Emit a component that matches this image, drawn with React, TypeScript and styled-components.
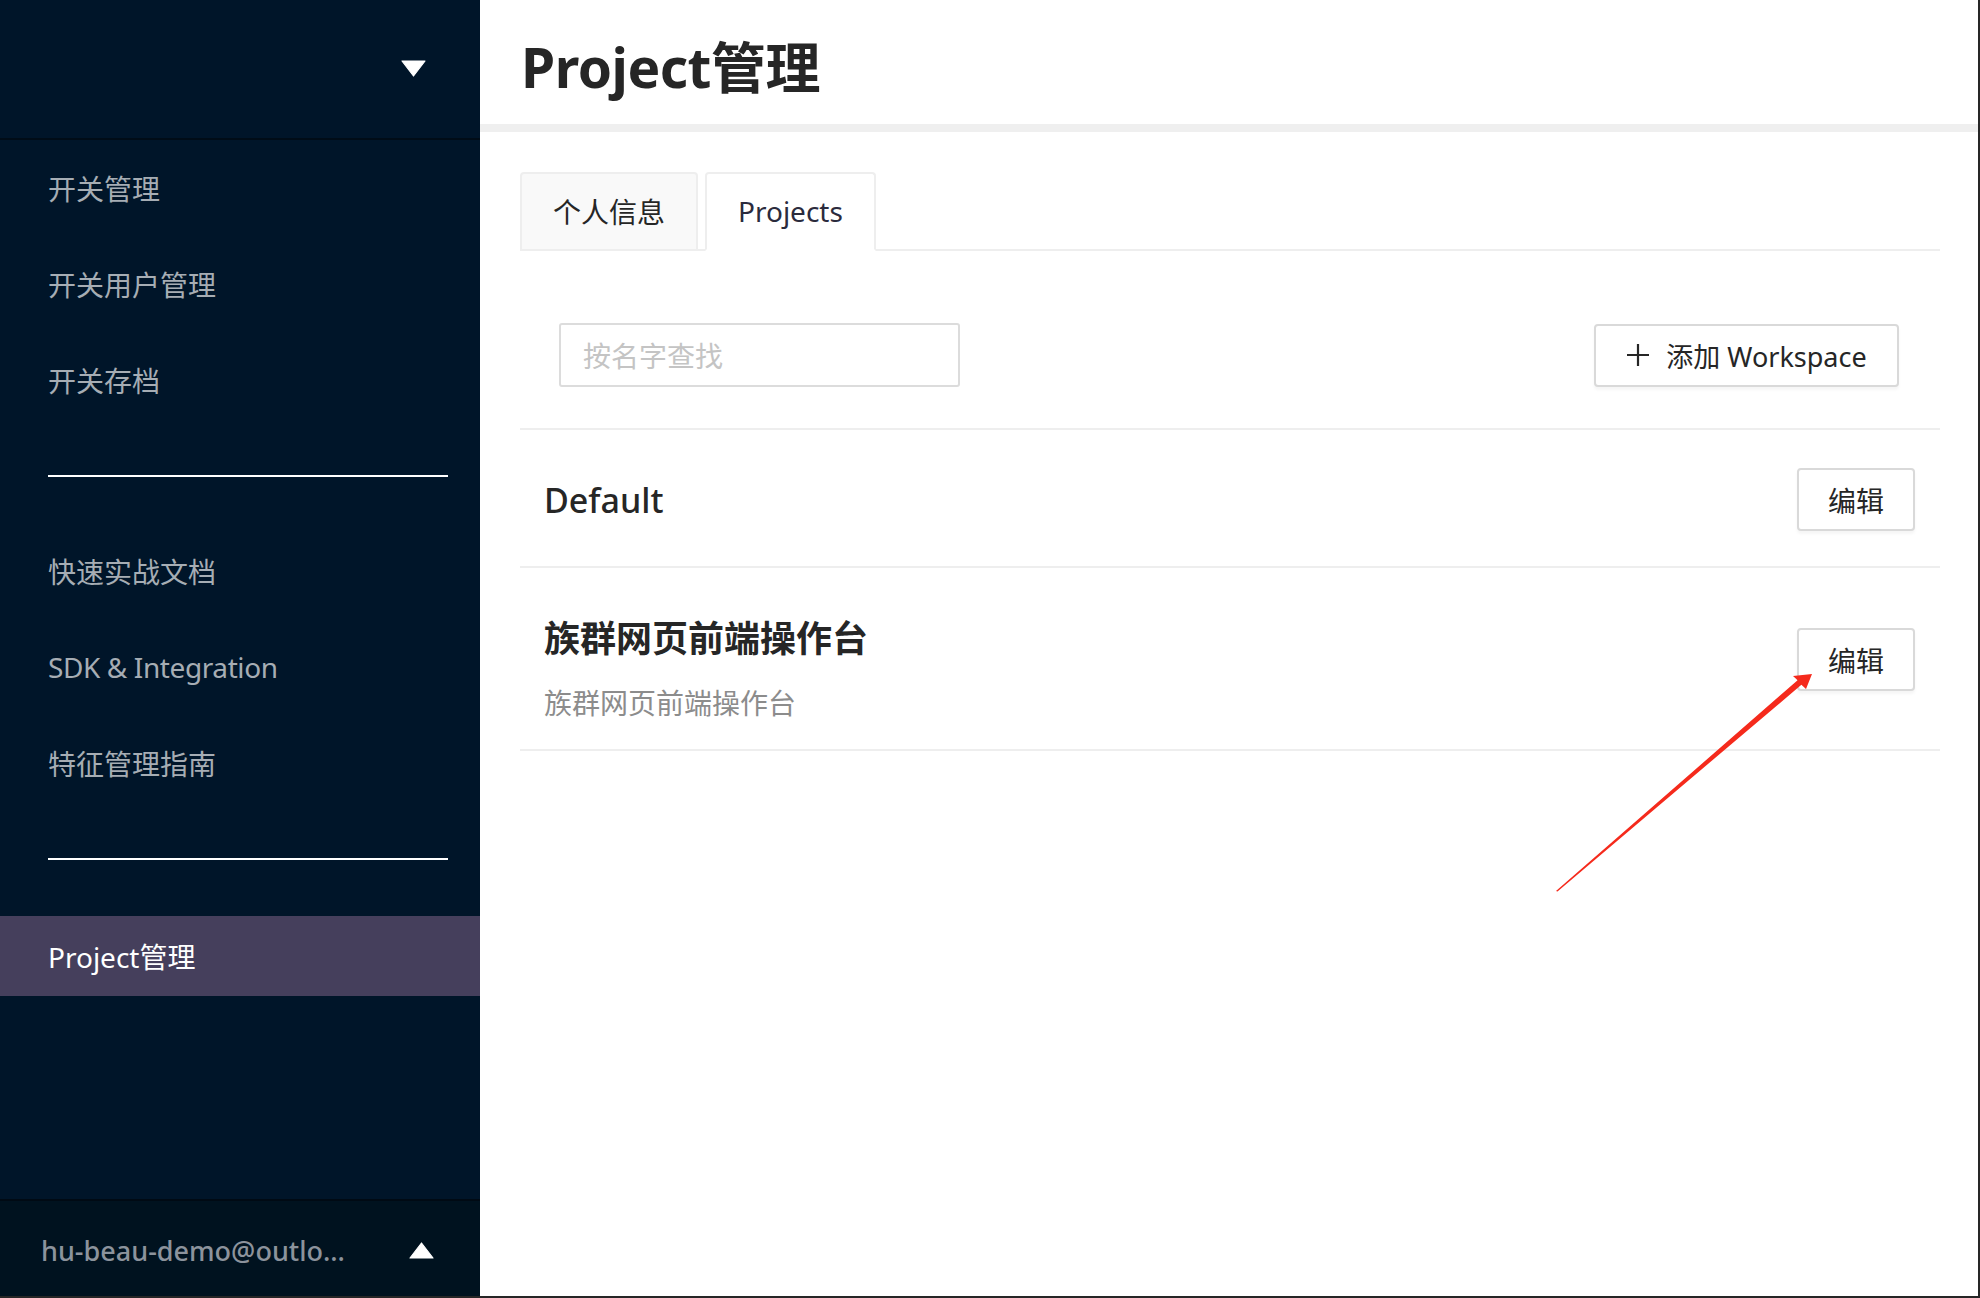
import React from "react";
import styled, { createGlobalStyle } from "styled-components";

const GlobalStyle = createGlobalStyle`
  html, body { margin: 0; padding: 0; background: #ffffff; }
  body {
    font-family: "Noto Sans", "Noto Sans CJK SC", sans-serif;
    -webkit-font-smoothing: antialiased;
  }
  * { box-sizing: border-box; }
`;

const Frame = styled.div`
  position: relative;
  display: flex;
  width: 1980px;
  height: 1298px;
  border-right: 2px solid #262626;
  border-bottom: 2px solid #262626;
  overflow: hidden;
`;

/* ---------- Sidebar ---------- */
const Sidebar = styled.aside`
  width: 480px;
  flex: none;
  display: flex;
  flex-direction: column;
  background: #001529;
  font-family: "Noto Sans", "Noto Sans CJK SC", sans-serif;
`;

const SideHeader = styled.div`
  height: 140px;
  flex: none;
  display: flex;
  align-items: center;
  justify-content: flex-end;
  padding: 0 54px 2px 0;
  border-bottom: 2px solid #000c17;
`;

const NavGroup = styled.nav<{ $top?: number }>`
  display: flex;
  flex-direction: column;
  padding-top: ${(p) => p.$top ?? 0}px;
`;

const NavItem = styled.div<{ $active?: boolean; $height?: number }>`
  height: ${(p) => p.$height ?? 96}px;
  display: flex;
  align-items: center;
  padding-left: 48px;
  font-size: 28px;
  color: ${(p) => (p.$active ? "#ffffff" : "#a6adb4")};
  background: ${(p) => (p.$active ? "#453f5c" : "transparent")};
`;

const NavLatin = styled.span`
  letter-spacing: -0.4px;
`;

const NavDivider = styled.hr`
  height: 2px;
  border: none;
  margin: 47px 32px 46px 48px;
  background: #ffffff;
`;

const SideFooter = styled.div`
  margin-top: auto;
  height: 97px;
  display: flex;
  align-items: center;
  justify-content: space-between;
  padding: 3px 46px 0 41px;
  border-top: 2px solid #000a14;
  background: #00121f;
`;

const Email = styled.span`
  font-size: 27px;
  font-weight: 500;
  color: #8c939c;
`;

/* ---------- Main ---------- */
const Main = styled.main`
  flex: 1;
  display: flex;
  flex-direction: column;
  background: #ffffff;
`;

const PageHeader = styled.header`
  height: 120px;
  display: flex;
  align-items: center;
  padding: 4px 0 0 41px;
  border-bottom: 8px solid #efefef;
  box-sizing: content-box;
`;

const PageTitle = styled.h1`
  margin: 0;
  font-size: 55px;
  font-weight: 700;
  color: #262626;
  letter-spacing: -0.5px;
`;

const Content = styled.section`
  padding: 40px 38px 0 40px;
`;

const TabBar = styled.div`
  display: flex;
  gap: 7px;
  height: 79px;
  border-bottom: 2px solid #eeeeee;
`;

const Tab = styled.div<{ $active?: boolean }>`
  height: 79px;
  display: flex;
  align-items: center;
  padding: 0 31px 2px;
  font-size: 28px;
  color: ${(p) => (p.$active ? "#2b2b3d" : "#262626")};
  background: ${(p) => (p.$active ? "#ffffff" : "#f9f9f9")};
  border: 2px solid #eeeeee;
  border-bottom-color: ${(p) => (p.$active ? "#ffffff" : "#eeeeee")};
  border-radius: 4px 4px 0 0;
`;

const Toolbar = styled.div`
  display: flex;
  justify-content: space-between;
  align-items: center;
  margin-top: 72px;
  padding: 0 41px 41px 39px;
  border-bottom: 2px solid #eeeeee;
`;

const SearchInput = styled.input`
  width: 401px;
  height: 64px;
  padding: 2px 22px 0;
  font-family: "Noto Sans", "Noto Sans CJK SC", sans-serif;
  font-size: 28px;
  color: #333;
  border: 2px solid #dcdcdc;
  border-radius: 3px;
  outline: none;
  &::placeholder { color: #c4c4c4; }
`;

const Button = styled.button<{ $wide?: boolean }>`
  height: 63px;
  min-width: ${(p) => (p.$wide ? "305px" : "118px")};
  display: inline-flex;
  align-items: center;
  justify-content: center;
  gap: 16px;
  padding: 0 24px;
  font-family: "Noto Sans", "Noto Sans CJK SC", sans-serif;
  font-size: 27px;
  color: #262626;
  background: #ffffff;
  border: 2px solid #d9d9d9;
  border-radius: 4px;
  box-shadow: 0 3px 3px rgba(0, 0, 0, 0.04);
  cursor: pointer;
`;

const EditLabel = styled.span`
  font-size: 28px;
`;

const Row = styled.div<{ $top?: boolean }>`
  display: flex;
  justify-content: space-between;
  align-items: ${(p) => (p.$top ? "flex-start" : "center")};
  padding: ${(p) => (p.$top ? "47px 25px 27px 24px" : "38px 25px 35px 24px")};
  border-bottom: 2px solid #eeeeee;
`;

const RowText = styled.div`
  display: flex;
  flex-direction: column;
`;

const RowTitle = styled.h3<{ $strong?: boolean }>`
  margin: 0;
  font-size: ${(p) => (p.$strong ? 36 : 34)}px;
  line-height: 48px;
  font-weight: ${(p) => (p.$strong ? 700 : 500)};
  color: #262626;
`;

const RowDesc = styled.p`
  margin: 21px 0 0;
  font-size: 28px;
  line-height: 38px;
  color: #8c8c8c;
`;

const RowButtonSlot = styled.div<{ $offset?: number }>`
  margin-top: ${(p) => p.$offset ?? 0}px;
`;

const Annotation = styled.svg`
  position: absolute;
  left: 1540px;
  top: 660px;
  width: 290px;
  height: 250px;
  pointer-events: none;
`;

const Caret = ({ up }: { up?: boolean }) => (
  <svg width="25" height="17" viewBox="0 0 25 17">
    <polygon
      points={up ? "12.5,1 24,16 1,16" : "1,1 24,1 12.5,16"}
      fill="#ffffff"
      stroke="#ffffff"
      strokeWidth="1.2"
      strokeLinejoin="round"
    />
  </svg>
);

const PlusIcon = () => (
  <svg width="24" height="24" viewBox="0 0 24 24">
    <path d="M12 1v22M1 12h22" stroke="#262626" strokeWidth="2.2" />
  </svg>
);

export default function App() {
  return (
    <>
      <GlobalStyle />
      <Frame>
        <Sidebar>
          <SideHeader>
            <Caret />
          </SideHeader>
          <NavGroup>
            <NavItem>开关管理</NavItem>
            <NavItem>开关用户管理</NavItem>
            <NavItem>开关存档</NavItem>
          </NavGroup>
          <NavDivider />
          <NavGroup>
            <NavItem>快速实战文档</NavItem>
            <NavItem>
              <NavLatin>SDK &amp; Integration</NavLatin>
            </NavItem>
            <NavItem>特征管理指南</NavItem>
          </NavGroup>
          <NavDivider />
          <NavGroup $top={10}>
            <NavItem $active $height={80}>
              Project管理
            </NavItem>
          </NavGroup>
          <SideFooter>
            <Email>hu-beau-demo@outlo...</Email>
            <Caret up />
          </SideFooter>
        </Sidebar>

        <Main>
          <PageHeader>
            <PageTitle>Project管理</PageTitle>
          </PageHeader>
          <Content>
            <TabBar>
              <Tab>个人信息</Tab>
              <Tab $active>Projects</Tab>
            </TabBar>
            <Toolbar>
              <SearchInput placeholder="按名字查找" />
              <Button $wide>
                <PlusIcon />
                <span>添加 Workspace</span>
              </Button>
            </Toolbar>
            <Row>
              <RowTitle>Default</RowTitle>
              <Button>
                <EditLabel>编辑</EditLabel>
              </Button>
            </Row>
            <Row $top>
              <RowText>
                <RowTitle $strong>族群网页前端操作台</RowTitle>
                <RowDesc>族群网页前端操作台</RowDesc>
              </RowText>
              <RowButtonSlot $offset={13}>
                <Button>
                  <EditLabel>编辑</EditLabel>
                </Button>
              </RowButtonSlot>
            </Row>
          </Content>
        </Main>

        <Annotation viewBox="0 0 290 250">
          <polygon
            points="16,231 17.5,231.5 261.4,24.8 266,29 272,14 253,16 257.6,20.2"
            fill="#f52a1c"
          />
        </Annotation>
      </Frame>
    </>
  );
}
